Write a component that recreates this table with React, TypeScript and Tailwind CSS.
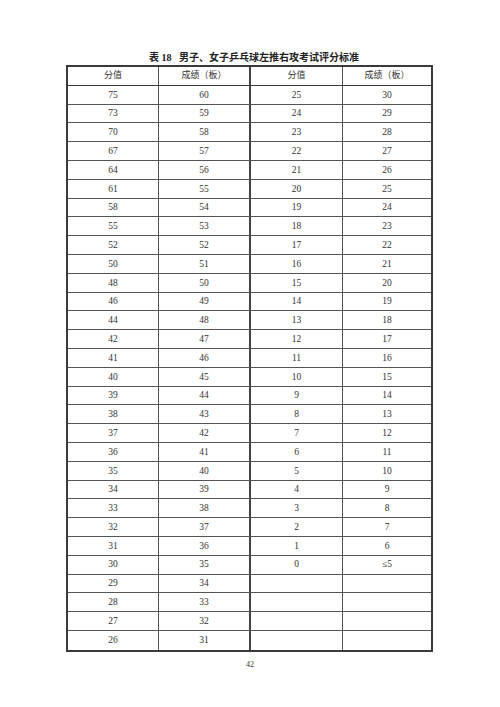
import React from "react";

const left: [string, string][] = [
  ["75", "60"], ["73", "59"], ["70", "58"], ["67", "57"], ["64", "56"], ["61", "55"],
  ["58", "54"], ["55", "53"], ["52", "52"], ["50", "51"], ["48", "50"], ["46", "49"],
  ["44", "48"], ["42", "47"], ["41", "46"], ["40", "45"], ["39", "44"], ["38", "43"],
  ["37", "42"], ["36", "41"], ["35", "40"], ["34", "39"], ["33", "38"], ["32", "37"],
  ["31", "36"], ["30", "35"], ["29", "34"], ["28", "33"], ["27", "32"], ["26", "31"],
];
const right: [string, string][] = [
  ["25", "30"], ["24", "29"], ["23", "28"], ["22", "27"], ["21", "26"], ["20", "25"],
  ["19", "24"], ["18", "23"], ["17", "22"], ["16", "21"], ["15", "20"], ["14", "19"],
  ["13", "18"], ["12", "17"], ["11", "16"], ["10", "15"], ["9", "14"], ["8", "13"],
  ["7", "12"], ["6", "11"], ["5", "10"], ["4", "9"], ["3", "8"], ["2", "7"],
  ["1", "6"], ["0", "≤5"], ["", ""], ["", ""], ["", ""], ["", ""],
];

const font = { fontFamily: '"Liberation Serif", "Noto Sans CJK SC", serif' };

function Row({ cells, header, last }: { cells: string[]; header?: boolean; last?: boolean }) {
  return (
    <div
      className={`grid grid-cols-[91px_92px_92px_88px] h-[18.8px] items-center text-[#333] ${
        header ? "border-b-[1.5px] border-[#3a3a3a] text-[9px]" : last ? "text-[9.5px]" : "border-b border-[#555] text-[9.5px]"
      }`}
    >
      <div className="h-full flex items-center justify-center border-r border-[#555]">{cells[0]}</div>
      <div className="h-full flex items-center justify-center border-r-2 border-[#444]">{cells[1]}</div>
      <div className="h-full flex items-center justify-center border-r border-[#555]">{cells[2]}</div>
      <div className="h-full flex items-center justify-center">{cells[3]}</div>
    </div>
  );
}

export default function App() {
  return (
    <div className="w-[500px] h-[707px] bg-white antialiased" style={font}>
      <div className="pt-[52px] flex flex-col items-center">
        <div className="h-[12px] leading-[12px] text-[10px] font-bold text-[#222] pl-[8px]">
          表 18&nbsp;&nbsp;&nbsp;男子、女子乒乓球左推右攻考试评分标准
        </div>
        <div className="mt-[1px] ml-[-1px] w-[367px] border-2 border-[#3a3a3a]">
          <Row cells={["分值", "成绩（板）", "分值", "成绩（板）"]} header />
          {left.map((l, i) => (
            <Row
              key={i}
              cells={[l[0], l[1], right[i][0], right[i][1]]}
              last={i === left.length - 1}
            />
          ))}
        </div>
        <div className="mt-[8px] text-[8px] leading-[10px] text-[#333]">42</div>
      </div>
    </div>
  );
}
